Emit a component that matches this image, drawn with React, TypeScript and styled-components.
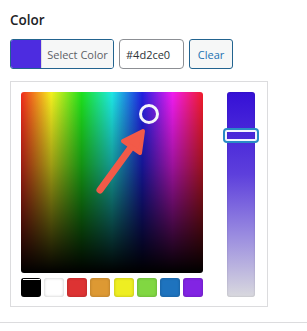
import React from 'react';
import styled, { createGlobalStyle } from 'styled-components';

const GlobalStyle = createGlobalStyle`
  body {
    margin: 0;
    background: #fff;
    font-family: "Open Sans", "Noto Sans", sans-serif;
  }
`;

const Section = styled.div`
  padding: 10px 10px 0;
`;

const Heading = styled.div`
  font-size: 13.5px;
  font-weight: 600;
  line-height: 20px;
  color: #1d2327;
`;

const Controls = styled.div`
  display: flex;
  gap: 5px;
  margin-top: 9px;
  height: 30px;
`;

const ResultButton = styled.div`
  display: flex;
  width: 104px;
  border: 1px solid #22638f;
  border-radius: 3px;
  overflow: hidden;
  box-sizing: border-box;
`;

const ResultSwatch = styled.div<{ $color: string }>`
  width: 30px;
  background: ${(p) => p.$color};
`;

const ResultLabel = styled.div`
  flex: 1;
  display: flex;
  align-items: center;
  justify-content: center;
  background: #f6f7f7;
  border-left: 1px solid #dcdcde;
  font-size: 11px;
  color: #5c6166;
`;

const HexInput = styled.div`
  width: 65px;
  box-sizing: border-box;
  border: 1px solid #8c8f94;
  border-radius: 4px;
  display: flex;
  align-items: center;
  padding-left: 6px;
  font-size: 11px;
  color: #2c3338;
`;

const ClearButton = styled.div`
  width: 44px;
  box-sizing: border-box;
  border: 1px solid #22638f;
  border-radius: 3px;
  background: #f6f7f7;
  display: flex;
  align-items: center;
  justify-content: center;
  font-size: 11px;
  color: #2271b1;
`;

const Panel = styled.div`
  margin-top: 12px;
  width: 258px;
  box-sizing: border-box;
  border: 1px solid #dcdcde;
  padding: 10px 11px 9px 10px;
  display: flex;
  gap: 24px;
`;

const PickerColumn = styled.div`
  width: 182px;
  display: flex;
  flex-direction: column;
  gap: 5px;
`;

const Square = styled.div`
  position: relative;
  height: 181px;
  border-radius: 3px;
  background: linear-gradient(to bottom, rgba(0, 0, 0, 0) 0%, rgba(0, 0, 0, 0.35) 40%, #000 100%),
    linear-gradient(
      to right,
      #f02a1c,
      #f5f020 16.6%,
      #1ee01c 33.3%,
      #1ee8e4 50%,
      #2020e0 66.6%,
      #f01cf0 83.3%,
      #f01c2a
    );
`;

const PickerRing = styled.div`
  position: absolute;
  left: 118px;
  top: 12px;
  width: 20px;
  height: 20px;
  box-sizing: border-box;
  border: 3px solid #f4f4fa;
  border-radius: 50%;
`;

const Arrow = styled.svg`
  position: absolute;
  left: 0;
  top: 0;
`;

const PaletteMark = styled.div`
  position: absolute;
  left: 2px;
  bottom: -7px;
  width: 17px;
  height: 7px;
  background: repeating-linear-gradient(
    to bottom,
    #fff 0,
    #fff 1px,
    transparent 1px,
    transparent 3px
  );
`;

const Palette = styled.div`
  display: flex;
  justify-content: space-between;
`;

const PaletteSwatch = styled.div<{ $color: string }>`
  width: 20px;
  height: 19px;
  border-radius: 3px;
  background: ${(p) => p.$color};
  box-shadow: inset 0 0 3px rgba(0, 0, 0, 0.25);
`;

const Slider = styled.div`
  position: relative;
  width: 28px;
  border-radius: 3px;
  background: linear-gradient(to bottom, #3510d6, #5d3fdc 40%, #9a8ce0 70%, #d9d9de);
  box-shadow: inset 0 0 2px rgba(0, 0, 0, 0.2);
`;

const SliderHandle = styled.div`
  position: absolute;
  left: -4px;
  right: -4px;
  top: 36px;
  height: 15px;
  box-sizing: border-box;
  border: 2px solid #2a8bc6;
  border-radius: 4px;
  box-shadow: inset 0 0 0 2px #f4f6ff;
`;

const Divider = styled.div`
  margin-top: 15px;
  height: 1px;
  background: #dcdcde;
`;

const palette = ['#000000', '#ffffff', '#dd3333', '#dd9933', '#eeee22', '#81d742', '#1e73be', '#8224e3'];

export default function App() {
  const value = '#4d2ce0';
  return (
    <>
      <GlobalStyle />
      <Section>
        <Heading>Color</Heading>
        <Controls>
          <ResultButton>
            <ResultSwatch $color={value} />
            <ResultLabel>Select Color</ResultLabel>
          </ResultButton>
          <HexInput>{value}</HexInput>
          <ClearButton>Clear</ClearButton>
        </Controls>
        <Panel>
          <PickerColumn>
            <Square>
              <PickerRing />
              <Arrow width="182" height="181" viewBox="0 0 182 181">
                <line x1="79" y1="98" x2="111" y2="54" stroke="#f25a48" strokeWidth="7" strokeLinecap="round" />
                <polygon
                  points="122,39 102,49 119,61"
                  fill="#f25a48"
                  stroke="#f25a48"
                  strokeWidth="4"
                  strokeLinejoin="round"
                />
              </Arrow>
              <PaletteMark />
            </Square>
            <Palette>
              {palette.map((c) => (
                <PaletteSwatch key={c} $color={c} />
              ))}
            </Palette>
          </PickerColumn>
          <Slider>
            <SliderHandle />
          </Slider>
        </Panel>
      </Section>
      <Divider />
    </>
  );
}
